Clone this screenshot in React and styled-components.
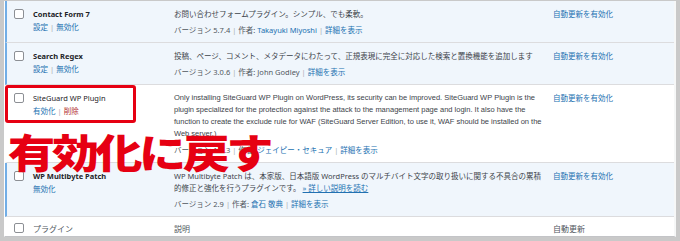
import React from 'react';
import styled, { createGlobalStyle } from 'styled-components';

const GlobalStyle = createGlobalStyle`
  html, body {
    margin: 0;
    padding: 0;
    background: #fff;
  }
  body {
    width: 680px;
    height: 241px;
    overflow: hidden;
    font-family: "Noto Sans", "Noto Sans CJK JP", sans-serif;
  }
`;

const Frame = styled.div`
  position: relative;
  width: 680px;
  height: 241px;
  box-sizing: border-box;
  padding: 1px 4px 4px 4px;
  background: #c9c9c9;
`;

const Table = styled.div`
  display: flex;
  flex-direction: column;
  height: 100%;
  background: #fff;
  border-left: 1px solid #fff;
  border-right: 2px solid #f6f7f7;
  border-bottom: 1px solid #c3c4c7;
  box-sizing: border-box;
`;

const Row = styled.div`
  display: grid;
  grid-template-columns: 26px 141px 379px 1fr;
  padding: 7px 0 5px;
  background: ${(p) => (p.$active ? '#f0f6fc' : '#fff')};
  border-left: 2px solid ${(p) => (p.$active ? '#72aee6' : '#fff')};
  border-bottom: 1px solid #dcdcde;
  font-size: 7.5px;
  color: #3c434a;
`;

const FootRow = styled(Row)`
  flex: 1;
  padding: 5px 0 0;
  border-bottom: none;
  font-size: 8px;
  color: #50575e;
  line-height: 13px;
`;

const Check = styled.span`
  display: block;
  width: 10px;
  height: 10px;
  box-sizing: border-box;
  margin: 1px 0 0 7px;
  border: 1px solid #8c8f94;
  border-radius: 2px;
  background: #fff;
`;

const Name = styled.strong`
  display: block;
  line-height: 13px;
  font-weight: ${(p) => (p.$active ? 700 : 400)};
  color: #1d2327;
`;

const Actions = styled.div`
  line-height: 13px;
  color: #a7aaad;
`;

const Link = styled.span`
  color: ${(p) => (p.$danger ? '#b32d2e' : '#2271b1')};
  text-decoration: ${(p) => (p.$underline ? 'underline' : 'none')};
`;

const Sep = styled.span`
  color: #a7aaad;
  margin: 0 2px;
`;

const Desc = styled.div`
  line-height: 12px;
  white-space: nowrap;
  font-family: ${(p) =>
    p.$latin
      ? '"Liberation Sans", "Noto Sans CJK JP", sans-serif'
      : '"Noto Sans", "Noto Sans CJK JP", sans-serif'};
`;

const Line = styled.div``;

const Version = styled.div`
  margin-top: 4px;
  line-height: 13px;
  color: #50575e;
  white-space: nowrap;
`;

const Auto = styled.div`
  line-height: 12px;
  color: #2271b1;
`;

const Highlight = styled.div`
  position: absolute;
  left: 5px;
  top: 85px;
  width: 131px;
  height: 38px;
  box-sizing: border-box;
  border: 3px solid #e60012;
  border-radius: 3px;
`;

const Caption = styled.div`
  position: absolute;
  left: 8px;
  top: 131px;
  font-family: "Noto Sans CJK JP", sans-serif;
  font-size: 40px;
  font-weight: 800;
  line-height: 1;
  letter-spacing: -3px;
  color: #e60012;
  white-space: nowrap;
  transform: scaleX(1.18);
  transform-origin: left top;
`;

const plugins = [
  {
    name: 'Contact Form 7',
    active: true,
    actions: [{ label: '設定' }, { label: '無効化' }],
    desc: ['お問い合わせフォームプラグイン。シンプル、でも柔軟。'],
    version: '5.7.4',
    author: 'Takayuki Miyoshi',
    authorLink: true
  },
  {
    name: 'Search Regex',
    active: true,
    actions: [{ label: '設定' }, { label: '無効化' }],
    desc: ['投稿、ページ、コメント、メタデータにわたって、正規表現に完全に対応した検索と置換機能を追加します'],
    version: '3.0.6',
    author: 'John Godley'
  },
  {
    name: 'SiteGuard WP Plugin',
    active: false,
    latin: true,
    actions: [{ label: '有効化' }, { label: '削除', danger: true }],
    desc: [
      'Only installing SiteGuard WP Plugin on WordPress, its security can be improved. SiteGuard WP Plugin is the',
      'plugin specialized for the protection against the attack to the management page and login. It also have the',
      'function to create the exclude rule for WAF (SiteGuard Server Edition, to use it, WAF should be installed on the',
      'Web server.)'
    ],
    version: '1.7.3',
    author: 'ジェイピー・セキュア',
    authorLink: true
  },
  {
    name: 'WP Multibyte Patch',
    active: true,
    actions: [{ label: '無効化' }],
    desc: [
      'WP Multibyte Patch は、本家版、日本語版 WordPress のマルチバイト文字の取り扱いに関する不具合の累積',
      <>
        的修正と強化を行うプラグインです。 <Link $underline>» 詳しい説明を読む</Link>
      </>
    ],
    version: '2.9',
    author: '倉石 敬典',
    authorLink: true
  }
];

const PluginRow = ({ plugin }) => (
  <Row $active={plugin.active}>
    <div>
      <Check />
    </div>
    <div>
      <Name $active={plugin.active}>{plugin.name}</Name>
      <Actions>
        {plugin.actions.map((a, i) => (
          <React.Fragment key={a.label}>
            {i > 0 && <Sep>|</Sep>}
            <Link $danger={a.danger}>{a.label}</Link>
          </React.Fragment>
        ))}
      </Actions>
    </div>
    <div>
      <Desc $latin={plugin.latin}>
        {plugin.desc.map((line, i) => (
          <Line key={i}>{line}</Line>
        ))}
      </Desc>
      <Version>
        バージョン {plugin.version}
        <Sep>|</Sep>
        作者: {plugin.authorLink ? <Link>{plugin.author}</Link> : plugin.author}
        <Sep>|</Sep>
        <Link>詳細を表示</Link>
      </Version>
    </div>
    <Auto>自動更新を有効化</Auto>
  </Row>
);

const App = () => (
  <>
    <GlobalStyle />
    <Frame>
      <Table>
        {plugins.map((p) => (
          <PluginRow key={p.name} plugin={p} />
        ))}
        <FootRow>
          <div>
            <Check />
          </div>
          <div>プラグイン</div>
          <div>説明</div>
          <div>自動更新</div>
        </FootRow>
      </Table>
      <Highlight />
      <Caption>有効化に戻す</Caption>
    </Frame>
  </>
);

export default App;
